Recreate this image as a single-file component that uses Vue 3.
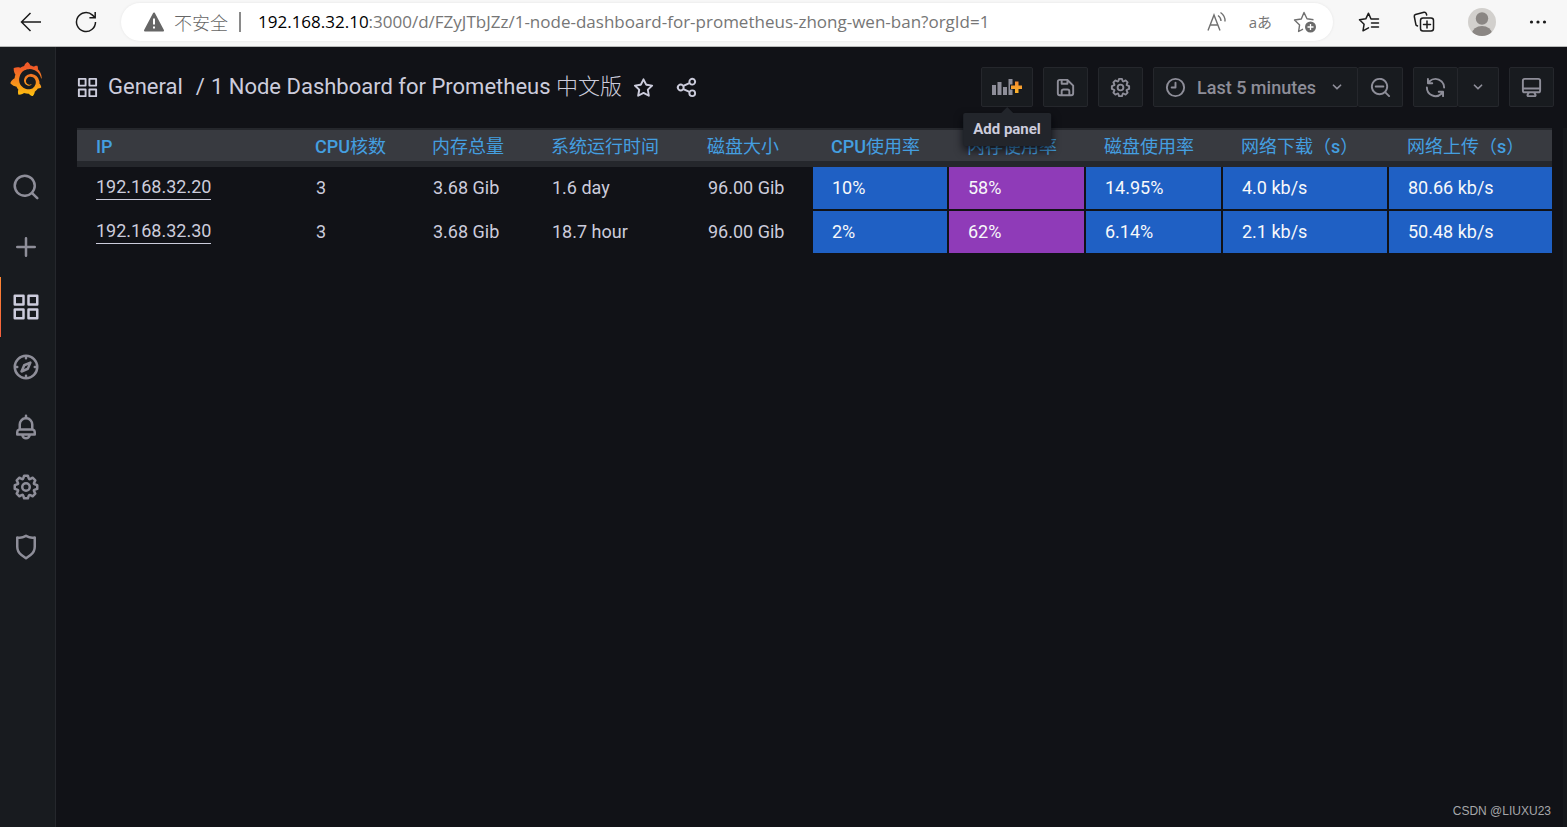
<script setup>
const icons = {
  apps: 'M10,13H3a1,1,0,0,0-1,1v7a1,1,0,0,0,1,1h7a1,1,0,0,0,1-1V14A1,1,0,0,0,10,13ZM9,20H4V15H9ZM21,2H14a1,1,0,0,0-1,1v7a1,1,0,0,0,1,1h7a1,1,0,0,0,1-1V3A1,1,0,0,0,21,2ZM20,9H15V4h5Zm1,4H14a1,1,0,0,0-1,1v7a1,1,0,0,0,1,1h7a1,1,0,0,0,1-1V14A1,1,0,0,0,21,13Zm-1,7H15V15h5ZM10,2H3A1,1,0,0,0,2,3v7a1,1,0,0,0,1,1h7a1,1,0,0,0,1-1V3A1,1,0,0,0,10,2ZM9,9H4V4H9Z',
  search: 'M21.71,20.29,18,16.61A9,9,0,1,0,16.61,18l3.68,3.68a1,1,0,0,0,1.42,0A1,1,0,0,0,21.71,20.29ZM11,18a7,7,0,1,1,7-7A7,7,0,0,1,11,18Z',
  plus: 'M19,11H13V5a1,1,0,0,0-2,0v6H5a1,1,0,0,0,0,2h6v6a1,1,0,0,0,2,0V13h6a1,1,0,0,0,0-2Z',
  compass: 'M12,2A10,10,0,1,0,22,12,10,10,0,0,0,12,2Zm1,17.93V19a1,1,0,0,0-2,0v.93A8,8,0,0,1,4.07,13H5a1,1,0,0,0,0-2H4.07A8,8,0,0,1,11,4.07V5a1,1,0,0,0,2,0V4.07A8,8,0,0,1,19.93,11H19a1,1,0,0,0,0,2h.93A8,8,0,0,1,13,19.93ZM15.14,7.55l-5,2.12a1,1,0,0,0-.52.52l-2.12,5a1,1,0,0,0,.21,1.1,1,1,0,0,0,.7.29.93.93,0,0,0,.4-.08l5-2.12a1,1,0,0,0,.52-.52l2.12-5a1,1,0,0,0-1.31-1.31Zm-2.49,5.1-2.28,1,1-2.28,2.28-1Z',
  bell: 'M18,13.18V10a6,6,0,0,0-5-5.91V3a1,1,0,0,0-2,0V4.09A6,6,0,0,0,6,10v3.18A3,3,0,0,0,4,16v2a1,1,0,0,0,1,1H8.14a4,4,0,0,0,7.72,0H19a1,1,0,0,0,1-1V16A3,3,0,0,0,18,13.18ZM8,10a4,4,0,0,1,8,0v3H8Zm4,10a2,2,0,0,1-1.72-1h3.44A2,2,0,0,1,12,20Zm6-3H6V16a1,1,0,0,1,1-1H17a1,1,0,0,1,1,1Z',
  cog: 'M21.32,9.55l-1.89-.63.89-1.78A1,1,0,0,0,20.13,6L18,3.87a1,1,0,0,0-1.15-.19l-1.78.89-.63-1.89A1,1,0,0,0,13.5,2h-3a1,1,0,0,0-.95.68L8.92,4.57,7.14,3.68A1,1,0,0,0,6,3.87L3.87,6a1,1,0,0,0-.19,1.15l.89,1.78-1.89.63A1,1,0,0,0,2,10.5v3a1,1,0,0,0,.68.95l1.89.63-.89,1.78A1,1,0,0,0,3.87,18L6,20.13a1,1,0,0,0,1.15.19l1.78-.89.63,1.89a1,1,0,0,0,.95.68h3a1,1,0,0,0,.95-.68l.63-1.89,1.78.89A1,1,0,0,0,18,20.13L20.13,18a1,1,0,0,0,.19-1.15l-.89-1.78,1.89-.63A1,1,0,0,0,22,13.5v-3A1,1,0,0,0,21.32,9.55ZM20,12.78l-1.2.4A2,2,0,0,0,17.64,16l.57,1.14-1.1,1.1L16,17.64a2,2,0,0,0-2.79,1.16l-.4,1.2H11.22l-.4-1.2A2,2,0,0,0,8,17.64l-1.14.57-1.1-1.1L6.36,16A2,2,0,0,0,5.2,13.18L4,12.78V11.22l1.2-.4A2,2,0,0,0,6.36,8L5.79,6.89l1.1-1.1L8,6.36A2,2,0,0,0,10.82,5.2l.4-1.2h1.56l.4,1.2A2,2,0,0,0,16,6.36l1.14-.57,1.1,1.1L17.64,8a2,2,0,0,0,1.16,2.79l1.2.4ZM12,8a4,4,0,1,0,4,4A4,4,0,0,0,12,8Zm0,6a2,2,0,1,1,2-2A2,2,0,0,1,12,14Z',
  shield: 'M19.63,3.65a1,1,0,0,0-.84-.2,8,8,0,0,1-6.22-1.27,1,1,0,0,0-1.14,0A8,8,0,0,1,5.21,3.45a1,1,0,0,0-.84.2A1,1,0,0,0,4,4.43v7.45a9,9,0,0,0,3.77,7.33l3.65,2.6a1,1,0,0,0,1.16,0l3.65-2.6A9,9,0,0,0,20,11.88V4.43A1,1,0,0,0,19.63,3.65ZM18,11.88a7,7,0,0,1-2.93,5.7L12,19.77,8.93,17.58A7,7,0,0,1,6,11.88V5.58a10,10,0,0,0,6-1.39,10,10,0,0,0,6,1.39Z',
  star: 'M22,9.67A1,1,0,0,0,21.14,9l-5.69-.83L12.9,3a1,1,0,0,0-1.8,0L8.55,8.16,2.86,9a1,1,0,0,0-.81.68,1,1,0,0,0,.25,1l4.13,4-1,5.68A1,1,0,0,0,6.9,21.44L12,18.77l5.1,2.67a.93.93,0,0,0,.46.12,1,1,0,0,0,.59-.19,1,1,0,0,0,.4-1l-1-5.68,4.13-4A1,1,0,0,0,22,9.67Zm-6.15,4a1,1,0,0,0-.29.88l.72,4.2-3.76-2a1.06,1.06,0,0,0-.94,0l-3.76,2,.72-4.2a1,1,0,0,0-.29-.88l-3-3,4.21-.61a1,1,0,0,0,.76-.55L12,5.7l1.88,3.82a1,1,0,0,0,.76.55l4.21.61Z',
  share: 'M18,14a4,4,0,0,0-3.08,1.48l-5.1-2.35a3.64,3.64,0,0,0,0-2.26l5.1-2.35A4,4,0,1,0,14,6a4.17,4.17,0,0,0,.07.71L8.79,9.14a4,4,0,1,0,0,5.72l5.28,2.43A4.17,4.17,0,0,0,14,18a4,4,0,1,0,4-4ZM18,4a2,2,0,1,1-2,2A2,2,0,0,1,18,4ZM6,14a2,2,0,1,1,2-2A2,2,0,0,1,6,14Zm12,6a2,2,0,1,1,2-2A2,2,0,0,1,18,20Z',
  save: 'M20.71,9.29l-6-6a1,1,0,0,0-.32-.21A1.09,1.09,0,0,0,14,3H6A3,3,0,0,0,3,6V18a3,3,0,0,0,3,3H18a3,3,0,0,0,3-3V10A1,1,0,0,0,20.71,9.29ZM9,5h4V7H9Zm6,14H9V16a1,1,0,0,1,1-1h4a1,1,0,0,1,1,1Zm4-1a1,1,0,0,1-1,1H17V16a3,3,0,0,0-3-3H10a3,3,0,0,0-3,3v3H6a1,1,0,0,1-1-1V6A1,1,0,0,1,6,5H7V8A1,1,0,0,0,8,9h6a1,1,0,0,0,1-1V6.41l4,4Z',
  clock: 'M12,6a1,1,0,0,0-1,1v4H8a1,1,0,0,0,0,2h4a1,1,0,0,0,1-1V7A1,1,0,0,0,12,6Zm0-4A10,10,0,1,0,22,12,10,10,0,0,0,12,2Zm0,18a8,8,0,1,1,8-8A8,8,0,0,1,12,20Z',
  down: 'M17,9.17a1,1,0,0,0-1.41,0L12,12.71,8.46,9.17a1,1,0,0,0-1.41,0,1,1,0,0,0,0,1.42l4.24,4.24a1,1,0,0,0,1.42,0L17,10.59A1,1,0,0,0,17,9.17Z',
  zoomOut: 'M21.71,20.29,18,16.61A9,9,0,1,0,16.61,18l3.68,3.68a1,1,0,0,0,1.42,0A1,1,0,0,0,21.71,20.29ZM11,18a7,7,0,1,1,7-7A7,7,0,0,1,11,18ZM15,10H7a1,1,0,0,0,0,2h8a1,1,0,0,0,0-2Z',
  sync: 'M19.91,15.51H15.38a1,1,0,0,0,0,2h2.4A8,8,0,0,1,4,12a1,1,0,0,0-2,0,10,10,0,0,0,16.88,7.23V21a1,1,0,0,0,2,0V16.5A1,1,0,0,0,19.91,15.51ZM12,2A10,10,0,0,0,5.12,4.77V3a1,1,0,0,0-2,0V7.5a1,1,0,0,0,1,1h4.5a1,1,0,0,0,0-2H6.22A8,8,0,0,1,20,12a1,1,0,0,0,2,0A10,10,0,0,0,12,2Z',
  monitor: 'M19,2H5A3,3,0,0,0,2,5V15a3,3,0,0,0,3,3H7.64l-.58,1a2,2,0,0,0,0,2,2,2,0,0,0,1.75,1h6.46A2,2,0,0,0,17,21a2,2,0,0,0,0-2l-.59-1H19a3,3,0,0,0,3-3V5A3,3,0,0,0,19,2ZM8.77,20,10,18H14l1.2,2ZM20,15a1,1,0,0,1-1,1H5a1,1,0,0,1-1-1V14H20Zm0-3H4V5A1,1,0,0,1,5,4H19a1,1,0,0,1,1,1Z',
}

const grafanaPath = 'M23.02 10.59a8.578 8.578 0 0 0-.862-3.034 8.911 8.911 0 0 0-1.789-2.445c.337-1.342-.413-2.505-.413-2.505-1.292-.08-2.113.4-2.416.62-.052-.02-.102-.044-.154-.064-.22-.089-.446-.172-.677-.247-.231-.073-.47-.14-.711-.197a9.867 9.867 0 0 0-.875-.161C14.557.753 12.94 0 12.94 0c-1.804 1.145-2.147 2.744-2.147 2.744l-.018.093c-.098.029-.2.057-.298.088-.138.042-.275.094-.413.143-.138.055-.275.107-.41.166a8.869 8.869 0 0 0-1.557.87l-.063-.029c-2.497-.955-4.716.195-4.716.195-.203 2.658.996 4.33 1.235 4.636a11.608 11.608 0 0 0-.607 2.635C1.636 12.677.953 15.014.953 15.014c1.926 2.214 4.171 2.351 4.171 2.351.003-.002.006-.002.006-.005.285.509.615.994.986 1.446.156.19.32.371.488.548-.704 2.009.099 3.68.099 3.68 2.144.08 3.553-.937 3.849-1.173a9.784 9.784 0 0 0 3.164.501h.08l.055-.003.107-.002.103-.005.003.002c1.01 1.44 2.788 1.646 2.788 1.646 1.264-1.332 1.337-2.653 1.337-2.94v-.058c0-.02-.003-.039-.003-.06.265-.187.52-.387.758-.6a7.875 7.875 0 0 0 1.415-1.7c1.43.083 2.437-.885 2.437-.885-.236-1.49-1.085-2.216-1.264-2.354l-.018-.013-.016-.013a.217.217 0 0 1-.031-.02c.008-.092.016-.18.02-.27.011-.162.016-.323.016-.48v-.253l-.005-.098-.008-.135a1.891 1.891 0 0 0-.01-.13c-.003-.042-.008-.083-.013-.125l-.016-.124-.018-.122a6.215 6.215 0 0 0-2.032-3.73 6.015 6.015 0 0 0-3.222-1.46 6.292 6.292 0 0 0-.85-.048l-.107.002h-.063l-.044.003-.104.008a4.777 4.777 0 0 0-3.335 1.695c-.332.4-.592.84-.768 1.297a4.594 4.594 0 0 0-.312 1.817l.003.091c.005.055.007.11.013.164a3.615 3.615 0 0 0 .698 1.82 3.53 3.53 0 0 0 1.827 1.282c.33.098.66.14.971.137.039 0 .078 0 .114-.002l.063-.003c.02 0 .041-.003.062-.003.034-.002.065-.007.099-.01.007 0 .018-.003.028-.003l.031-.005.06-.008a1.18 1.18 0 0 0 .112-.02c.036-.008.072-.013.109-.024a2.634 2.634 0 0 0 .914-.415c.028-.02.056-.041.085-.065a.248.248 0 0 0 .039-.35.244.244 0 0 0-.309-.06l-.078.042c-.09.044-.184.083-.283.116a2.476 2.476 0 0 1-.475.096c-.028.003-.054.006-.083.006l-.083.002c-.026 0-.054 0-.08-.002l-.102-.006h-.012l-.024.006c-.016-.003-.031-.003-.044-.006-.031-.002-.06-.007-.091-.01a2.59 2.59 0 0 1-.724-.213 2.557 2.557 0 0 1-.667-.438 2.52 2.52 0 0 1-.805-1.475 2.306 2.306 0 0 1-.029-.444l.006-.122v-.023l.002-.031c.003-.021.003-.04.005-.06a3.163 3.163 0 0 1 1.352-2.29 3.12 3.12 0 0 1 .937-.43 2.946 2.946 0 0 1 .776-.101h.06l.07.002.045.003h.026l.07.005a4.041 4.041 0 0 1 1.635.49 3.94 3.94 0 0 1 1.602 1.662 3.77 3.77 0 0 1 .397 1.414l.005.076.003.075c.002.026.002.05.002.075 0 .024.003.052 0 .07v.065l-.002.073-.008.174a6.195 6.195 0 0 1-.08.639 5.1 5.1 0 0 1-.267.927 5.31 5.31 0 0 1-.624 1.13 5.052 5.052 0 0 1-3.237 2.014 4.82 4.82 0 0 1-.649.066l-.039.003h-.287a6.607 6.607 0 0 1-1.716-.265 6.776 6.776 0 0 1-3.4-2.274 6.75 6.75 0 0 1-.746-1.15 6.616 6.616 0 0 1-.714-2.596l-.005-.083-.002-.02v-.056l-.003-.073v-.096l-.003-.104v-.07l.003-.163c.008-.22.026-.45.054-.678a8.707 8.707 0 0 1 .28-1.355c.128-.444.286-.872.473-1.277a7.04 7.04 0 0 1 1.456-2.1 5.925 5.925 0 0 1 .953-.763c.169-.111.343-.213.524-.306.089-.05.182-.091.273-.135.047-.02.093-.042.138-.062a7.177 7.177 0 0 1 .714-.267l.145-.045c.049-.015.098-.026.148-.041.098-.029.197-.052.296-.076.049-.013.1-.02.15-.033l.15-.032.151-.028.076-.013.075-.01.153-.024c.057-.01.114-.013.171-.023l.169-.021c.036-.003.073-.008.106-.01l.073-.008.036-.003.042-.002c.057-.003.114-.008.171-.01l.086-.006h.023l.037-.003.145-.007a7.999 7.999 0 0 1 1.708.125 7.917 7.917 0 0 1 2.048.68 8.253 8.253 0 0 1 1.672 1.09l.09.077.089.078c.06.052.114.107.171.159.057.052.112.106.166.16.052.055.107.107.159.164a8.671 8.671 0 0 1 1.41 1.978c.012.026.028.052.04.078l.04.078.075.156c.023.051.05.1.07.153l.065.15a8.848 8.848 0 0 1 .45 1.34.19.19 0 0 0 .201.142.186.186 0 0 0 .172-.184c.01-.246.002-.532-.024-.856z'

const menu = [
  { icon: 'search', label: 'Search' },
  { icon: 'plus', label: 'Create' },
  { icon: 'apps', label: 'Dashboards', active: true },
  { icon: 'compass', label: 'Explore' },
  { icon: 'bell', label: 'Alerting' },
  { icon: 'cog', label: 'Configuration' },
  { icon: 'shield', label: 'Server Admin' },
]

const columns = [
  { title: 'IP', width: 220 },
  { title: 'CPU核数', width: 117 },
  { title: '内存总量', width: 119 },
  { title: '系统运行时间', width: 156 },
  { title: '磁盘大小', width: 124 },
  { title: 'CPU使用率', width: 136, tone: 'blue' },
  { title: '内存使用率', width: 137, tone: 'purple' },
  { title: '磁盘使用率', width: 137, tone: 'blue' },
  { title: '网络下载（s）', width: 166, tone: 'blue' },
  { title: '网络上传（s）', width: 163, tone: 'blue' },
]

const rows = [
  ['192.168.32.20', '3', '3.68 Gib', '1.6 day', '96.00 Gib', '10%', '58%', '14.95%', '4.0 kb/s', '80.66 kb/s'],
  ['192.168.32.30', '3', '3.68 Gib', '18.7 hour', '96.00 Gib', '2%', '62%', '6.14%', '2.1 kb/s', '50.48 kb/s'],
]

// Splits a heading into Latin and Chinese runs so that each gets its own weight.
const runs = (title) =>
  title.split(/([A-Za-z]+)/).filter(Boolean).map((text) => ({ text, latin: /[A-Za-z]/.test(text) }))
</script>

<template>
  <div class="window">
    <header class="browser">
      <button class="chrome-btn" aria-label="Back">
        <svg width="22" height="22" viewBox="0 0 22 22" fill="none" stroke="#1b1b1b" stroke-width="1.5"><path d="M21 11H1.5M10.5 2 1.5 11l9 9" /></svg>
      </button>
      <button class="chrome-btn" aria-label="Refresh page">
        <svg width="22" height="22" viewBox="0 0 22 22" fill="none" stroke="#1b1b1b" stroke-width="1.5"><path d="M20.5 11a9.5 9.5 0 1 1-3-6.900l2.200 2.200M20.200 1v5.800h-5.800" /></svg>
      </button>
      <div class="address">
        <svg width="20" height="20" viewBox="0 0 20 20"><path d="M10 1.5 19 18.5H1Z" fill="#666" stroke="#666" stroke-width="2" stroke-linejoin="round" /><path d="M10 6.5v6M10 14.5v2" stroke="#fff" stroke-width="2" /></svg>
        <span class="insecure">不安全</span>
        <span class="bar"></span>
        <span class="url"><b>192.168.32.10</b>:3000/d/FZyJTbJZz/1-node-dashboard-for-prometheus-zhong-wen-ban?orgId=1</span>
        <button class="chrome-btn" aria-label="Read aloud">
          <svg width="22" height="22" viewBox="0 0 22 22" fill="none" stroke="#707070" stroke-width="1.4"><path d="M2 19.500 8 4l6 15.500M4 14h8M12 4.500q3 2 3 5.500M14.500 1.500q5 3.500 4.500 9" /></svg>
        </button>
        <button class="chrome-btn translate" aria-label="Translate">aあ</button>
        <button class="chrome-btn" aria-label="Add to favorites">
          <svg width="24" height="24" viewBox="0 0 24 24" fill="none"><path d="M11 20.200 6.600 22.500l1-6.600L2.500 11l6.800-1L12 3.500 15 9.800l6.500.900" transform="translate(-1 -1)" stroke="#707070" stroke-width="1.4" stroke-linejoin="round" /><circle cx="17.500" cy="17" r="5.500" fill="#6b6b6b" /><path d="M17.500 14v6M14.500 17h6" stroke="#fff" stroke-width="1.300" /></svg>
        </button>
      </div>
      <button class="chrome-btn" aria-label="Favorites">
        <svg width="22" height="22" viewBox="0 0 22 22" fill="none" stroke="#1b1b1b" stroke-width="1.500" stroke-linejoin="round" stroke-linecap="round"><path d="M13 8 10.500 2.200 7.800 7.800 1.500 8.800l4.600 4.400L5 19.800l5.500-3M13 8h7.500M13.500 12h7M13.500 16h7" /></svg>
      </button>
      <button class="chrome-btn" aria-label="Collections">
        <svg width="22" height="22" viewBox="0 0 22 22" fill="none" stroke="#1b1b1b" stroke-width="1.500" stroke-linejoin="round" stroke-linecap="round"><path d="M4.500 15 3 14.200 1.300 5.500Q1 4 2.500 3.500L11 1.300q1.700-.300 2.200 1.200l.5 1.500" /><rect x="7.500" y="7" width="13" height="13" rx="2.500" /><path d="M14 10v7M10.500 13.500h7" /></svg>
      </button>
      <button class="chrome-btn" aria-label="Profile">
        <svg width="28" height="28" viewBox="0 0 28 28"><defs><clipPath id="avatar"><circle cx="14" cy="14" r="14" /></clipPath></defs><g clip-path="url(#avatar)"><rect width="28" height="28" fill="#d2d0cd" /><circle cx="14" cy="10.500" r="6.200" fill="#8a8683" /><ellipse cx="14" cy="26" rx="10" ry="8" fill="#8a8683" /></g></svg>
      </button>
      <button class="chrome-btn" aria-label="More">
        <svg width="18" height="6" viewBox="0 0 18 6" fill="#1b1b1b"><circle cx="2.500" cy="3" r="1.600" /><circle cx="9" cy="3" r="1.600" /><circle cx="15.500" cy="3" r="1.600" /></svg>
      </button>
    </header>

    <div class="app">
      <nav class="sidebar" aria-label="Main menu">
        <a class="logo" href="#" aria-label="Home">
          <svg width="34" height="34" viewBox="0 0 24 24">
            <defs><linearGradient id="flame" x1="0" y1="1" x2="0" y2="0"><stop offset="0" stop-color="#fcc10f" /><stop offset="0.5" stop-color="#f58220" /><stop offset="0.85" stop-color="#f05a28" /></linearGradient></defs>
            <path :d="grafanaPath" fill="url(#flame)" />
          </svg>
        </a>
        <a v-for="m in menu" :key="m.label" href="#" class="item" :class="{ active: m.active }" :aria-label="m.label">
          <svg width="30" height="30" viewBox="0 0 24 24" fill="currentColor"><path :d="icons[m.icon]" /></svg>
        </a>
      </nav>

      <main class="main">
        <div class="toolbar">
          <svg width="23" height="23" viewBox="0 0 24 24" fill="currentColor"><path :d="icons.apps" /></svg>
          <h1 class="title"><a href="#">General</a><span class="slash">/</span><a href="#">1 Node Dashboard for Prometheus <span class="thin">中文版</span></a></h1>
          <button class="plain" aria-label="Mark as favorite"><svg width="23" height="23" viewBox="0 0 24 24" fill="currentColor"><path :d="icons.star" /></svg></button>
          <button class="plain" aria-label="Share dashboard"><svg width="23" height="23" viewBox="0 0 24 24" fill="currentColor"><path :d="icons.share" /></svg></button>

          <div class="actions">
            <div class="add-wrap">
              <button class="btn add" aria-describedby="add-tip" aria-label="Add panel">
                <svg width="30" height="18" viewBox="0 0 30 18">
                  <path d="M0 7h4v10H0zM5.500 4h4v13h-4zM11 9h4v8h-4zM16.500 1h4v16h-4z" fill="#8e8e99" />
                  <path d="M18 6.500h4v-4h6v13h-6v-4h-4z" fill="#181b1f" />
                  <path d="M19 7.500h4v-4h3.500v4h4V11h-4v4H23v-4h-4z" fill="url(#spark)" />
                  <defs><linearGradient id="spark" x1="0" y1="0" x2="0" y2="1"><stop offset="0" stop-color="#f58a30" /><stop offset="1" stop-color="#fbb52b" /></linearGradient></defs>
                </svg>
              </button>
              <div id="add-tip" class="tooltip" role="tooltip">Add panel</div>
            </div>
            <button class="btn" aria-label="Save dashboard"><svg width="23" height="23" viewBox="0 0 24 24" fill="currentColor"><path :d="icons.save" /></svg></button>
            <button class="btn" aria-label="Dashboard settings"><svg width="23" height="23" viewBox="0 0 24 24" fill="currentColor"><path :d="icons.cog" /></svg></button>
            <div class="group">
              <button class="btn time">
                <svg width="23" height="23" viewBox="0 0 24 24" fill="currentColor"><path :d="icons.clock" /></svg>
                <span>Last 5 minutes</span>
                <svg class="caret" width="20" height="20" viewBox="0 0 24 24" fill="currentColor"><path :d="icons.down" /></svg>
              </button>
              <button class="btn" aria-label="Zoom out"><svg width="23" height="23" viewBox="0 0 24 24" fill="currentColor"><path :d="icons.zoomOut" /></svg></button>
            </div>
            <div class="group">
              <button class="btn" aria-label="Refresh"><svg width="23" height="23" viewBox="0 0 24 24" fill="currentColor"><path :d="icons.sync" /></svg></button>
              <button class="btn narrow" aria-label="Refresh interval"><svg width="20" height="20" viewBox="0 0 24 24" fill="currentColor"><path :d="icons.down" /></svg></button>
            </div>
            <button class="btn" aria-label="Cycle view mode"><svg width="23" height="23" viewBox="0 0 24 24" fill="currentColor"><path :d="icons.monitor" /></svg></button>
          </div>
        </div>

        <section class="panel">
          <table>
            <colgroup><col v-for="c in columns" :key="c.title" :style="{ width: c.width + 'px' }" /></colgroup>
            <thead>
              <tr>
                <th v-for="c in columns" :key="c.title" scope="col"><span v-for="(p, i) in runs(c.title)" :key="i" :class="{ latin: p.latin }">{{ p.text }}</span></th>
              </tr>
            </thead>
            <tbody>
              <tr v-for="r in rows" :key="r[0]">
                <td v-for="(v, i) in r" :key="i" :class="columns[i].tone">
                  <a v-if="i === 0" href="#">{{ v }}</a>
                  <template v-else>{{ v }}</template>
                </td>
              </tr>
            </tbody>
          </table>
        </section>
        <div class="watermark">CSDN @LIUXU23</div>
      </main>
    </div>
  </div>
</template>

<style>
body {
  background: #111217;
}
</style>

<style scoped>
* {
  box-sizing: border-box;
}
.window {
  display: flex;
  flex-direction: column;
  min-height: 100vh;
  font-family: Roboto, "Noto Sans CJK SC", sans-serif;
  color: #ccccdc;
  background: #111217;
}
a {
  color: inherit;
  text-decoration: none;
}
button {
  font: inherit;
  color: inherit;
  cursor: pointer;
}
svg {
  display: block;
  flex: none;
}

/* Browser bar */
.browser {
  display: flex;
  align-items: center;
  height: 47px;
  padding: 0 20px 3px;
  gap: 33px;
  background: #f7f7f7;
  border-bottom: 1px solid #b8bab9;
}
.chrome-btn {
  display: flex;
  padding: 0;
  border: 0;
  background: none;
}
.address {
  display: flex;
  align-items: center;
  flex: 1;
  min-width: 0;
  height: 38px;
  padding: 0 16px 0 23px;
  margin: 0 -8px 0 -9px;
  border-radius: 19px;
  background: #fff;
  box-shadow: 0 0 3px rgba(0, 0, 0, 0.08);
  font-family: "Open Sans", "Noto Sans CJK SC", sans-serif;
  font-size: 17px;
  color: #767676;
}
.insecure {
  margin-left: 10px;
  font-size: 18px;
  font-weight: 300;
  color: #666;
}
.bar {
  width: 2px;
  height: 20px;
  margin: 0 17px 0 11px;
  background: #8a8a8a;
}
.url {
  flex: 1;
  min-width: 0;
  overflow: hidden;
  white-space: nowrap;
}
.url b {
  font-weight: 400;
  color: #000;
}
.translate {
  margin: 0 21px;
  font-size: 15px;
}

/* Shell */
.app {
  display: flex;
  flex: 1;
}
.sidebar {
  width: 56px;
  flex: none;
  background: #181b1f;
  border-right: 1px solid #25272c;
}
.logo {
  display: flex;
  padding: 15px 0 61px 9px;
}
.item {
  display: flex;
  align-items: center;
  height: 60px;
  padding-left: 11px;
  color: #8e8e99;
  position: relative;
}
.item.active {
  color: #ccccdc;
}
.item.active::before {
  content: "";
  position: absolute;
  left: 0;
  top: 0;
  bottom: 0;
  width: 1px;
  background: linear-gradient(#ff8833, #f55f3e);
}
.main {
  flex: 1;
  min-width: 0;
  display: flex;
  flex-direction: column;
  position: relative;
}

/* Toolbar */
.toolbar {
  display: flex;
  align-items: center;
  padding: 20px 13px 21px 20px;
}
.title {
  margin: 0 0 0 9px;
  font-size: 22px;
  line-height: 40px;
  font-weight: 400;
  white-space: nowrap;
}
.thin {
  font-weight: 300;
}
.slash {
  margin: 0 6px 0 13px;
}
.plain {
  display: flex;
  padding: 0;
  margin: 0 10px;
  border: 0;
  background: none;
}
.actions {
  display: flex;
  gap: 10px;
  margin-left: auto;
  color: #8e8e99;
}
.group {
  display: flex;
}
.btn {
  display: flex;
  align-items: center;
  justify-content: center;
  width: 45px;
  height: 40px;
  padding: 0;
  border: 1px solid #25272c;
  border-radius: 2px;
  background: #181b1f;
}
.group .btn + .btn {
  border-left: 0;
}
.add {
  width: 52px;
}
.narrow {
  width: 41px;
}
.time {
  justify-content: flex-start;
  width: 205px;
  padding: 0 10px;
  gap: 10px;
  font-size: 18px;
  font-weight: 500;
  white-space: nowrap;
}
.caret {
  margin-left: auto;
}
.add-wrap {
  position: relative;
}
.tooltip {
  position: absolute;
  z-index: 2;
  top: 46px;
  left: 50%;
  transform: translateX(-50%);
  padding: 0 10px;
  border-radius: 2px;
  background: #22252b;
  box-shadow: 0 4px 8px rgba(1, 4, 9, 0.75);
  color: #ccccdc;
  font-size: 15px;
  font-weight: 700;
  line-height: 33px;
  white-space: nowrap;
}
.tooltip::before {
  content: "";
  position: absolute;
  top: -6px;
  left: 50%;
  margin-left: -6px;
  border: 6px solid transparent;
  border-top: 0;
  border-bottom-color: #22252b;
}

/* Table */
.panel {
  flex: 1;
  padding: 0 11px 0 21px;
  border-right: 4px solid #15171b;
}
table {
  width: 100%;
  table-layout: fixed;
  border-collapse: separate;
  border-spacing: 0;
  font-size: 18px;
}
th {
  height: 39px;
  padding: 3px 0 0 18px;
  border-top: 2px solid #25272c;
  border-bottom: 6px solid #25272c;
  background: #383a40;
  color: #449fe0;
  font-weight: 400;
  line-height: 20px;
  text-align: left;
  white-space: nowrap;
}
th:first-child {
  padding-left: 19px;
}
.latin {
  font-weight: 500;
}
td {
  height: 44px;
  padding: 0 0 2px 19px;
  border-right: 2px solid #111217;
  border-bottom: 2px solid #111217;
  white-space: nowrap;
}
td:last-child {
  border-right: 0;
}
td a {
  display: inline-block;
  line-height: 24px;
  border-bottom: 1px solid #ccccdc;
}
.blue {
  background: #1f60c4;
  color: #f7f8fa;
}
.purple {
  background: #8f3bb8;
  color: #f7f8fa;
}
.watermark {
  position: absolute;
  right: 16px;
  bottom: 8px;
  font-family: "Liberation Sans", Arial, sans-serif;
  font-size: 12px;
  line-height: 15px;
  color: #a6a7aa;
}
</style>
